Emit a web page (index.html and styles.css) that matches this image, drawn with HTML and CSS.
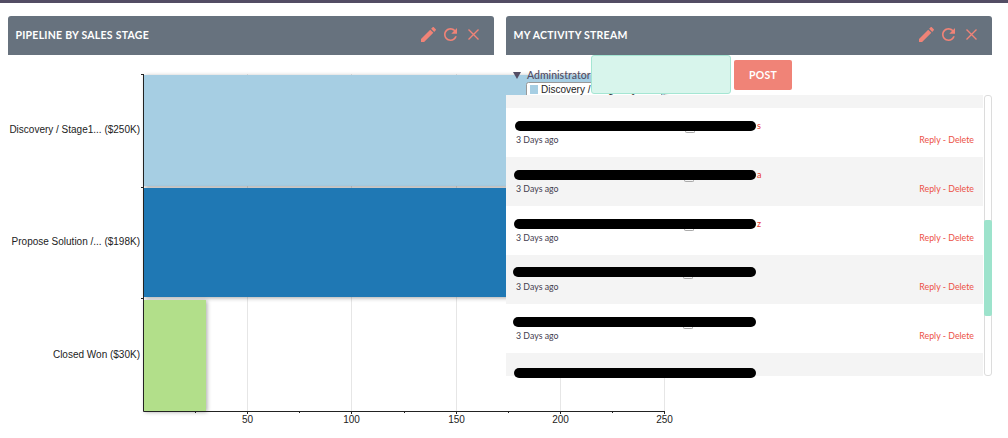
FILE: index.html
```html
<!DOCTYPE html>
<html lang="en">
<head>
<meta charset="utf-8">
<title>Dashboard</title>
<link rel="stylesheet" href="styles.css">
</head>
<body>
<div class="topbar"></div>
<main class="dashboard">
  <section class="dashlet dashlet-chart">
    <header class="dash-head">
      <h2 class="dash-title">Pipeline by Sales Stage</h2>
      <div class="dash-icons">
        <svg class="ico ico-edit" viewBox="3 3 18 18"><path d="M3 17.25V21h3.75L17.81 9.94l-3.75-3.75L3 17.25zM20.71 7.04c.39-.39.39-1.02 0-1.41l-2.34-2.34c-.39-.39-1.02-.39-1.41 0l-1.83 1.83 3.75 3.75 1.83-1.83z"/></svg>
        <svg class="ico ico-refresh" viewBox="4 4 16 16"><path d="M17.65 6.35C16.2 4.9 14.21 4 12 4c-4.42 0-7.99 3.58-7.99 8s3.57 8 7.99 8c3.73 0 6.84-2.55 7.73-6h-2.08c-.82 2.33-3.04 4-5.65 4-3.31 0-6-2.69-6-6s2.69-6 6-6c1.66 0 3.14.69 4.22 1.78L13 11h7V4l-2.35 2.35z"/></svg>
        <svg class="ico ico-close" viewBox="0 0 11 11"><path class="ico-line" d="M.5.5l10 10M10.5.5l-10 10"/></svg>
      </div>
    </header>
    <svg class="chart" width="680" height="378" viewBox="8 55 680 378">
      <g class="grid">
        <path d="M247.5 74V411M351.5 74V411M456.5 74V411M560.5 74V411M664.5 74V411"/>
      </g>
      <rect class="bar bar-1" x="144" y="75" width="520" height="111"/>
      <rect class="bar bar-2" x="144" y="188" width="412" height="109"/>
      <rect class="bar bar-3" x="144" y="300" width="62" height="111"/>
      <g class="axis">
        <path d="M143.5 74V411.5H664.5"/>
        <path d="M141 74.5h2M141 187.5h2M141 298.5h2M195.5 411v2M247.5 411v3M299.5 411v2M351.5 411v3M404.5 411v2M456.5 411v3M508.5 411v2M560.5 411v3M612.5 411v2M664.5 411v3"/>
      </g>
      <g class="labels-y">
        <text x="140" y="133">Discovery / Stage1... ($250K)</text>
        <text x="140" y="245">Propose Solution /... ($198K)</text>
        <text x="140" y="358">Closed Won ($30K)</text>
      </g>
      <g class="labels-x">
        <text x="247.5" y="423">50</text>
        <text x="351.5" y="423">100</text>
        <text x="456.5" y="423">150</text>
        <text x="560.5" y="423">200</text>
        <text x="664.5" y="423">250</text>
      </g>
      <g class="legend">
        <rect class="legend-box" x="526.5" y="82.5" width="135" height="40" rx="2"/>
        <rect class="swatch-1" x="530" y="85" width="8" height="9"/>
        <text x="541" y="93">Discovery / Stage1 Qualification</text>
        <rect class="swatch-2" x="530" y="97" width="8" height="9"/>
        <text x="541" y="105">Propose Solution / Quote</text>
      </g>
    </svg>
  </section>

  <section class="dashlet dashlet-stream">
    <header class="dash-head">
      <h2 class="dash-title">My Activity Stream</h2>
      <div class="dash-icons">
        <svg class="ico ico-edit" viewBox="3 3 18 18"><path d="M3 17.25V21h3.75L17.81 9.94l-3.75-3.75L3 17.25zM20.71 7.04c.39-.39.39-1.02 0-1.41l-2.34-2.34c-.39-.39-1.02-.39-1.41 0l-1.83 1.83 3.75 3.75 1.83-1.83z"/></svg>
        <svg class="ico ico-refresh" viewBox="4 4 16 16"><path d="M17.65 6.35C16.2 4.9 14.21 4 12 4c-4.42 0-7.99 3.58-7.99 8s3.57 8 7.99 8c3.73 0 6.84-2.55 7.73-6h-2.08c-.82 2.33-3.04 4-5.65 4-3.31 0-6-2.69-6-6s2.69-6 6-6c1.66 0 3.14.69 4.22 1.78L13 11h7V4l-2.35 2.35z"/></svg>
        <svg class="ico ico-close" viewBox="0 0 11 11"><path class="ico-line" d="M.5.5l10 10M10.5.5l-10 10"/></svg>
      </div>
    </header>
    <form class="post-form">
      <div class="author"><span class="caret"></span><span class="author-name">Administrator</span></div>
      <div class="post-input"></div>
      <button class="post-btn" type="button">POST</button>
    </form>
    <div class="stream-wrap">
      <div class="stream">
        <article class="row row-grey row-cut"></article>
        <article class="row">
          <div class="line line-a"><span class="redact"><i class="peek"></i></span><span class="tail">s</span></div>
          <div class="row-meta"><span>3 Days ago</span><span class="actions">Reply - Delete</span></div>
        </article>
        <article class="row row-grey">
          <div class="line line-b"><span class="redact"><i class="peek"></i></span><span class="tail">a</span></div>
          <div class="row-meta"><span>3 Days ago</span><span class="actions">Reply - Delete</span></div>
        </article>
        <article class="row">
          <div class="line line-b"><span class="redact"><i class="peek"></i></span><span class="tail">z</span></div>
          <div class="row-meta"><span>3 Days ago</span><span class="actions">Reply - Delete</span></div>
        </article>
        <article class="row row-grey">
          <div class="line line-c"><span class="redact"><i class="peek"></i></span></div>
          <div class="row-meta"><span>3 Days ago</span><span class="actions">Reply - Delete</span></div>
        </article>
        <article class="row">
          <div class="line line-d"><span class="redact"><i class="peek"></i></span></div>
          <div class="row-meta"><span>3 Days ago</span><span class="actions">Reply - Delete</span></div>
        </article>
        <article class="row row-grey row-last">
          <div class="line line-e"><span class="redact"></span></div>
        </article>
      </div>
      <div class="scrolltrack"><div class="scrollthumb"></div></div>
    </div>
  </section>
</main>
</body>
</html>
```
FILE: styles.css
```css
* { box-sizing: border-box; }
html, body { margin: 0; padding: 0; background: #fff; overflow: hidden; height: 100%; }
body { font-family: "Lato", "Liberation Sans", sans-serif; color: #534d64; }

.topbar { height: 3px; background: #534d64; }

.dashboard { display: flex; gap: 12px; padding: 13px 0 0 8px; }
.dashlet { width: 486px; flex: none; }
.dashlet-stream { position: relative; z-index: 1; }

.dash-head {
  height: 39px;
  background: #67727e;
  border-radius: 3px 3px 0 0;
  display: flex;
  align-items: center;
  justify-content: space-between;
  padding: 0 15px 2px 7.5px;
}
.dash-title {
  margin: 0;
  font-size: 10.5px;
  font-weight: 700;
  letter-spacing: .25px;
  text-transform: uppercase;
  color: #fff;
}
.dash-icons { display: flex; align-items: center; margin-top: -1px; }
.ico { display: block; fill: #f08377; }
.ico-edit { width: 15px; height: 15px; margin-right: 8px; }
.ico-refresh { width: 13px; height: 13px; margin-right: 11px; }
.ico-close { width: 11px; height: 11px; }
.ico-line { fill: none; stroke: #f08377; stroke-width: 1.4; }

/* chart */
.chart { display: block; overflow: visible; font-family: "Liberation Sans", Arial, sans-serif; }
.grid path { stroke: #e6e6e6; fill: none; }
.bar { filter: drop-shadow(1px 1px 2px rgba(0,0,0,.35)); }
.bar-1 { fill: #a6cee3; }
.bar-2 { fill: #1f78b4; }
.bar-3 { fill: #b2df8a; }
.axis path { fill: none; stroke: #222; }
.labels-y text { font-size: 10px; text-anchor: end; fill: #222; }
.labels-x text { font-size: 10px; text-anchor: middle; fill: #222; }
.legend text { font-size: 10px; fill: #222; }
.legend-box { fill: #fff; stroke: #999; }
.swatch-1 { fill: #a6cee3; }
.swatch-2 { fill: #1f78b4; }

/* post form */
.post-form { height: 40px; display: flex; align-items: flex-start; }
.author {
  width: 85px;
  padding: 14px 0 0 7px;
  display: flex;
  align-items: center;
  gap: 6px;
  font-size: 10.5px;
  line-height: 12px;
  font-weight: 500;
}
.caret {
  width: 0; height: 0;
  border-left: 4px solid transparent;
  border-right: 4px solid transparent;
  border-top: 7px solid #534d64;
}
.post-input {
  width: 140px;
  height: 39px;
  background: #d8f5ec;
  border: 1px solid #a5e6d3;
  border-radius: 3px;
}
.post-btn {
  margin: 5px 0 0 3px;
  width: 58px;
  height: 30px;
  border: 0;
  border-radius: 2px;
  background: #f08377;
  color: #fff;
  font: 700 10.5px "Lato", sans-serif;
  letter-spacing: .3px;
  padding: 0;
}

/* stream */
.stream-wrap { display: flex; height: 281px; background: #fff; }
.stream { width: 477px; flex: none; }
.row { height: 49px; background: #fff; padding-right: 9px; color: #45404f; }
.row-grey { background: #f4f4f4; }
.row-cut { height: 13px; }
.row-last { height: 23px; }
.row-meta {
  display: flex;
  justify-content: space-between;
  padding-left: 10px;
  font-size: 8.8px;
  line-height: 12px;
}
.actions { color: #ec5146; }

.line { display: flex; align-items: center; height: 10px; margin-bottom: 3px; font-size: 9px; color: #e8392e; }
.line-a { padding: 13px 0 0 9px; height: 23px; }
.line-b { padding: 13px 0 0 8px; height: 23px; }
.line-c { padding: 12px 0 0 7px; height: 22px; margin-bottom: 4px; }
.line-d { padding: 13px 0 0 7px; height: 23px; }
.line-e { padding: 15px 0 0 8px; height: 25px; }
.redact {
  position: relative;
  flex: none;
  display: block;
  height: 10px;
  border-radius: 5px;
  background: #000;
  width: 242px;
}
.line-a .redact { width: 241px; }
.line-c .redact, .line-d .redact { width: 243px; }
.tail { margin-left: 1px; line-height: 10px; }
.peek {
  position: absolute;
  left: 170px;
  top: 100%;
  width: 10px;
  height: 2px;
  border: 1px solid #aaa;
  border-top: 0;
  border-radius: 0 0 3px 3px;
}

.scrolltrack {
  width: 8px;
  margin-left: 1px;
  flex: none;
  position: relative;
  background: #fff;
  border: 1px solid #dcdcdc;
  border-radius: 3px;
}
.scrollthumb {
  position: absolute;
  left: -1px;
  right: -1px;
  top: 124px;
  height: 96px;
  background: #9de3cc;
  border-radius: 2px;
}
```
